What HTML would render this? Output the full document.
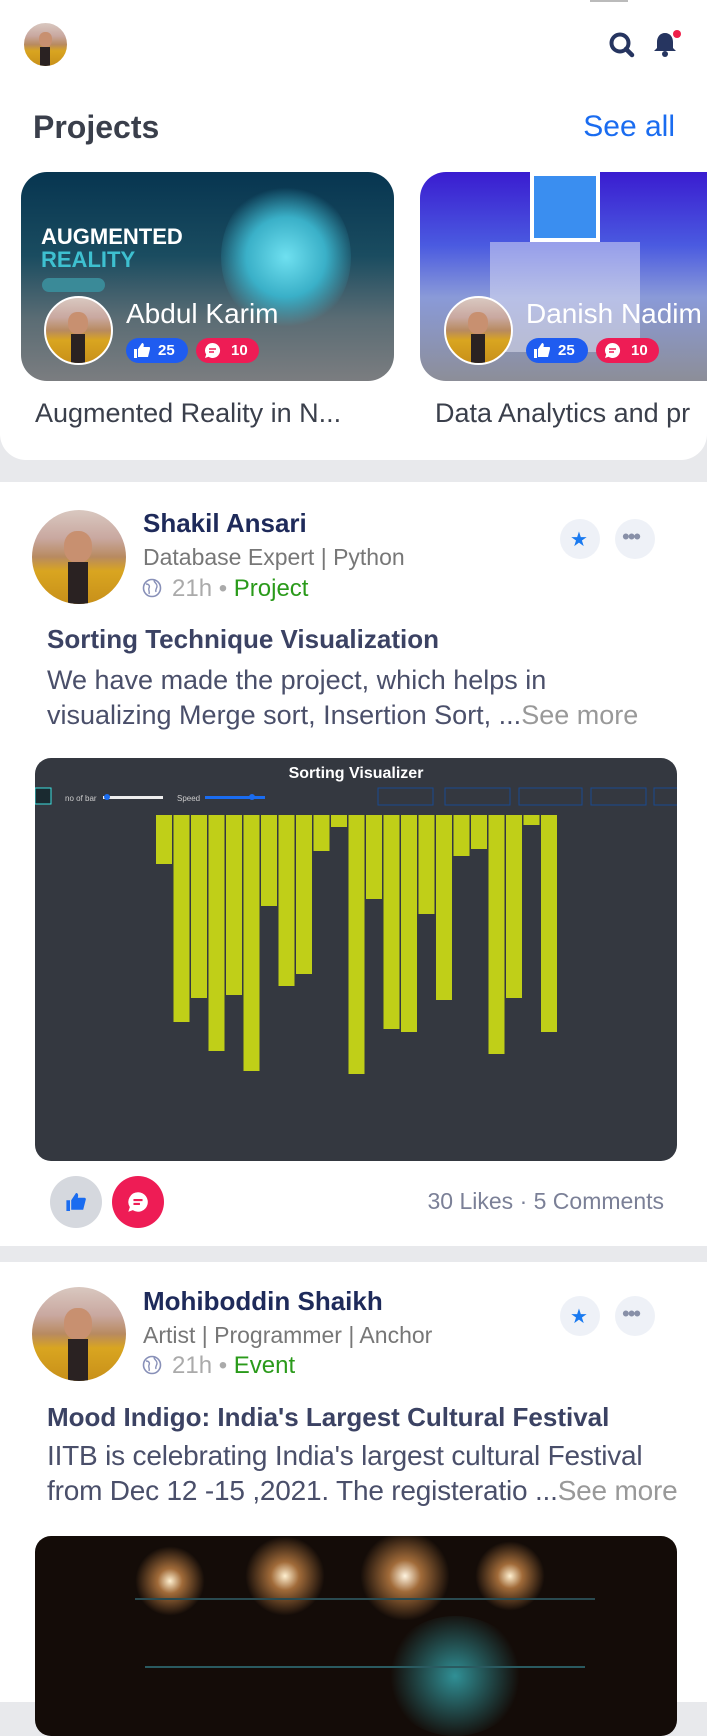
<!DOCTYPE html>
<html><head><meta charset="utf-8"><style>
*{margin:0;padding:0;box-sizing:border-box}
body{width:707px;height:1702px;overflow:hidden;background:#e8e9ec;font-family:"Liberation Sans",sans-serif;position:relative}
.a{position:absolute;white-space:nowrap}
.av{position:absolute;border-radius:50%;overflow:hidden;background:linear-gradient(180deg,#d9c8c0 0%,#c9a8a0 30%,#b88a60 50%,#d9a520 65%,#c8901a 100%);border:2px solid #fff}
.av:after{content:"";position:absolute;left:38%;top:55%;width:22%;height:50%;background:#2a2222}
.av:before{content:"";position:absolute;left:34%;top:22%;width:30%;height:34%;border-radius:45%;background:#c89070}
.badge{position:absolute;height:25px;border-radius:13px;color:#fff;font-weight:bold;font-size:15px;line-height:25px}
.btn{position:absolute;width:40px;height:40px;border-radius:50%;background:#eef1f7}
</style></head><body>
<div class="a" style="left:0;top:0;width:707px;height:460px;background:#fff;border-radius:0 0 26px 26px"></div>
<div class="a" style="left:590px;top:0;width:38px;height:2px;background:#bbb"></div>
<div class="av" style="left:22px;top:21px;width:47px;height:47px"></div>
<svg class="a" style="left:608px;top:31px" width="28" height="28" viewBox="0 0 28 28"><circle cx="12" cy="12" r="8.5" fill="none" stroke="#263560" stroke-width="4"/><path d="M18 18l6 6" stroke="#263560" stroke-width="4.5" stroke-linecap="round"/></svg>
<svg class="a" style="left:651px;top:29px" width="30" height="30" viewBox="0 0 30 30"><path d="M14 4c-5 0-8 4-8 9v6l-3 3h22l-3-3v-6c0-5-3-9-8-9z" fill="#263560"/><circle cx="14" cy="25" r="3" fill="#263560"/><circle cx="26" cy="5" r="4" fill="#f0204a"/></svg>
<div class="a" style="left:33px;top:109px;font-size:32px;font-weight:bold;color:#3a3f4b">Projects</div>
<div class="a" style="right:32px;top:110px;font-size:30px;color:#1a6cf0">See all</div>

<div class="a" style="left:21px;top:172px;width:373px;height:209px;border-radius:26px;overflow:hidden;background:linear-gradient(180deg,#073550 0%,#1a4c60 40%,#5a6c74 70%,#7b7d80 100%)">
 <div class="a" style="left:200px;top:10px;width:130px;height:150px;border-radius:50%;background:radial-gradient(circle,#6fe0f0 0%,#3ab0c8 40%,rgba(40,120,140,0) 70%)"></div>
 <div class="a" style="left:20px;top:52px;font-size:22px;font-weight:bold;color:#fff">AUGMENTED</div>
 <div class="a" style="left:20px;top:75px;font-size:22px;font-weight:bold;color:#3ec0d0">REALITY</div>
 <div class="a" style="left:21px;top:106px;width:63px;height:14px;border-radius:7px;background:#3a8a98"></div>
</div>
<div class="av" style="left:44px;top:296px;width:69px;height:69px"></div>
<div class="a" style="left:126px;top:298px;font-size:28px;color:#fff">Abdul Karim</div>
<div class="badge" style="left:126px;top:338px;width:62px;background:#1f5cf0;padding-left:32px">25</div>
<div class="badge" style="left:196px;top:338px;width:63px;background:#ee1c55;padding-left:35px">10</div>
<svg class="a" style="left:134px;top:343px" width="16" height="15" viewBox="0 0 16 15"><path d="M0 6h3v9H0zM4 6l4-6c2 0 2 2 1.5 4H15c1 0 1.5 1 1 2l-2 8H4z" fill="#fff"/></svg>
<svg class="a" style="left:204px;top:342px" width="17" height="17" viewBox="0 0 17 17"><path d="M8.5 1a7.5 7.5 0 1 1-4 13.8L1 16l1.2-3.5A7.5 7.5 0 0 1 8.5 1z" fill="#fff"/><path d="M5 7h7M5 10h5" stroke="#ee1c55" stroke-width="1.6"/></svg>
<div class="a" style="left:35px;top:398px;font-size:27px;color:#3a3f4b">Augmented Reality in N...</div>

<div class="a" style="left:420px;top:172px;width:287px;height:209px;border-radius:26px 0 0 26px;overflow:hidden;background:linear-gradient(180deg,#3a1cd0 0%,#4a5ae0 35%,#8a9ad8 60%,#8c8e98 100%)">
 <div class="a" style="left:110px;top:0;width:70px;height:70px;background:#3a8ef0;border:4px solid #fff"></div>
 <div class="a" style="left:70px;top:70px;width:150px;height:110px;background:rgba(230,230,245,.5)"></div>
</div>
<div class="av" style="left:444px;top:296px;width:69px;height:69px"></div>
<div class="a" style="left:526px;top:298px;font-size:28px;color:#fff">Danish Nadim</div>
<div class="badge" style="left:526px;top:338px;width:62px;background:#1f5cf0;padding-left:32px">25</div>
<div class="badge" style="left:596px;top:338px;width:63px;background:#ee1c55;padding-left:35px">10</div>
<svg class="a" style="left:534px;top:343px" width="16" height="15" viewBox="0 0 16 15"><path d="M0 6h3v9H0zM4 6l4-6c2 0 2 2 1.5 4H15c1 0 1.5 1 1 2l-2 8H4z" fill="#fff"/></svg>
<svg class="a" style="left:604px;top:342px" width="17" height="17" viewBox="0 0 17 17"><path d="M8.5 1a7.5 7.5 0 1 1-4 13.8L1 16l1.2-3.5A7.5 7.5 0 0 1 8.5 1z" fill="#fff"/><path d="M5 7h7M5 10h5" stroke="#ee1c55" stroke-width="1.6"/></svg>
<div class="a" style="left:435px;top:398px;font-size:27px;color:#3a3f4b">Data Analytics and pr</div>

<!-- post 1 -->
<div class="a" style="left:0;top:482px;width:707px;height:764px;background:#fff"></div>
<div class="av" style="left:30px;top:508px;width:98px;height:98px"></div>
<div class="a" style="left:143px;top:508px;font-size:26px;font-weight:bold;color:#1e2a5a">Shakil Ansari</div>
<div class="a" style="left:143px;top:544px;font-size:23px;color:#777">Database Expert | Python</div>
<svg class="a" style="left:142px;top:578px" width="20" height="20" viewBox="0 0 20 20"><circle cx="10" cy="10" r="8.5" fill="none" stroke="#8890b8" stroke-width="1.6"/><path d="M4 6c3 0 4 2 3 4s1 3 0 6M12 2c0 3 3 3 3 6s-2 3-1 6" fill="none" stroke="#8890b8" stroke-width="1.4"/></svg>
<div class="a" style="left:172px;top:575px;font-size:24px;color:#aaa">21h • <span style="color:#2a9a1a">Project</span></div>
<div class="btn" style="left:560px;top:519px"></div>
<div class="a" style="left:570px;top:527px;font-size:20px;color:#1a7af0">★</div>
<div class="btn" style="left:615px;top:519px"></div>
<div class="a" style="left:622px;top:524px;font-size:22px;color:#8890a8;letter-spacing:-2px">•••</div>
<div class="a" style="left:47px;top:624px;font-size:26px;font-weight:bold;color:#3b4263">Sorting Technique Visualization</div>
<div class="a" style="left:47px;top:663px;font-size:27px;color:#4a4f6a;line-height:35px">We have made the project, which helps in<br>visualizing Merge sort, Insertion Sort, ...<span style="color:#999">See more</span></div>
<svg class="a" style="left:35px;top:758px" width="642" height="403" viewBox="0 0 642 403">
<rect width="642" height="403" rx="16" fill="#343840"/>
<text x="321" y="20" fill="#fff" font-size="16" font-weight="bold" text-anchor="middle" font-family="Liberation Sans">Sorting Visualizer</text>
<rect x="0" y="30" width="16" height="16" fill="#1a2a30" stroke="#3ee0e0"/>
<text x="30" y="43" fill="#ccc" font-size="8" font-family="Liberation Sans">no of bar</text>
<rect x="68" y="38" width="60" height="3" fill="#eee"/><circle cx="72" cy="39" r="3" fill="#1a6cf0"/>
<text x="142" y="43" fill="#ccc" font-size="8" font-family="Liberation Sans">Speed</text>
<rect x="170" y="38" width="60" height="3" fill="#1a6cf0"/><circle cx="217" cy="39" r="3" fill="#1a6cf0"/>
<g fill="none" stroke="#1a4a90"><rect x="343" y="30" width="55" height="17"/><rect x="410" y="30" width="65" height="17"/><rect x="484" y="30" width="63" height="17"/><rect x="556" y="30" width="55" height="17"/><rect x="619" y="30" width="30" height="17"/></g>
<g fill="#c0cf18">
<rect x="121" y="57" width="16" height="49"/><rect x="138.5" y="57" width="16" height="207"/><rect x="156" y="57" width="16" height="183"/><rect x="173.5" y="57" width="16" height="236"/><rect x="191" y="57" width="16" height="180"/><rect x="208.5" y="57" width="16" height="256"/><rect x="226" y="57" width="16" height="91"/><rect x="243.5" y="57" width="16" height="171"/><rect x="261" y="57" width="16" height="159"/><rect x="278.5" y="57" width="16" height="36"/><rect x="296" y="57" width="16" height="12"/><rect x="313.5" y="57" width="16" height="259"/><rect x="331" y="57" width="16" height="84"/><rect x="348.5" y="57" width="16" height="214"/><rect x="366" y="57" width="16" height="217"/><rect x="383.5" y="57" width="16" height="99"/><rect x="401" y="57" width="16" height="185"/><rect x="418.5" y="57" width="16" height="41"/><rect x="436" y="57" width="16" height="34"/><rect x="453.5" y="57" width="16" height="239"/><rect x="471" y="57" width="16" height="183"/><rect x="488.5" y="57" width="16" height="10"/><rect x="506" y="57" width="16" height="217"/>
</g></svg>
<div class="a" style="left:50px;top:1176px;width:52px;height:52px;border-radius:50%;background:#d5d8de"></div>
<svg class="a" style="left:66px;top:1193px" width="20" height="18" viewBox="0 0 16 15"><path d="M0 6h3v9H0zM4 6l4-6c2 0 2 2 1.5 4H15c1 0 1.5 1 1 2l-2 8H4z" fill="#1a6cf0"/></svg>
<div class="a" style="left:112px;top:1176px;width:52px;height:52px;border-radius:50%;background:#ee1c55"></div>
<svg class="a" style="left:127px;top:1191px" width="22" height="22" viewBox="0 0 17 17"><path d="M8.5 1a7.5 7.5 0 1 1-4 13.8L1 16l1.2-3.5A7.5 7.5 0 0 1 8.5 1z" fill="#fff"/><path d="M5 7h7M5 10h5" stroke="#ee1c55" stroke-width="1.6"/></svg>
<div class="a" style="right:43px;top:1188px;font-size:23px;color:#7b8097">30 Likes · 5 Comments</div>

<!-- post 2 -->
<div class="a" style="left:0;top:1262px;width:707px;height:440px;background:#fff"></div>
<div class="av" style="left:30px;top:1285px;width:98px;height:98px"></div>
<div class="a" style="left:143px;top:1286px;font-size:26px;font-weight:bold;color:#1e2a5a">Mohiboddin Shaikh</div>
<div class="a" style="left:143px;top:1322px;font-size:23px;color:#777">Artist | Programmer | Anchor</div>
<svg class="a" style="left:142px;top:1355px" width="20" height="20" viewBox="0 0 20 20"><circle cx="10" cy="10" r="8.5" fill="none" stroke="#8890b8" stroke-width="1.6"/><path d="M4 6c3 0 4 2 3 4s1 3 0 6M12 2c0 3 3 3 3 6s-2 3-1 6" fill="none" stroke="#8890b8" stroke-width="1.4"/></svg>
<div class="a" style="left:172px;top:1352px;font-size:24px;color:#aaa">21h • <span style="color:#2a9a1a">Event</span></div>
<div class="btn" style="left:560px;top:1296px"></div>
<div class="a" style="left:570px;top:1304px;font-size:20px;color:#1a7af0">★</div>
<div class="btn" style="left:615px;top:1296px"></div>
<div class="a" style="left:622px;top:1301px;font-size:22px;color:#8890a8;letter-spacing:-2px">•••</div>
<div class="a" style="left:47px;top:1402px;font-size:26px;font-weight:bold;color:#3b4263">Mood Indigo: India's Largest Cultural Festival</div>
<div class="a" style="left:47px;top:1438px;font-size:28px;color:#4a4f6a;line-height:35px;letter-spacing:-0.2px">IITB is celebrating India's largest cultural Festival<br>from Dec 12 -15 ,2021. The registeratio ...<span style="color:#999">See more</span></div>
<div class="a" style="left:35px;top:1536px;width:642px;height:200px;border-radius:16px;overflow:hidden;background:#140c08">
 <div class="a" style="left:100px;top:10px;width:70px;height:70px;border-radius:50%;background:radial-gradient(circle,#fff0d0 0%,rgba(255,170,90,.6) 25%,rgba(0,0,0,0) 70%)"></div>
 <div class="a" style="left:210px;top:0;width:80px;height:80px;border-radius:50%;background:radial-gradient(circle,#fff0d0 0%,rgba(255,170,90,.6) 25%,rgba(0,0,0,0) 70%)"></div>
 <div class="a" style="left:325px;top:-5px;width:90px;height:90px;border-radius:50%;background:radial-gradient(circle,#fff4e0 0%,rgba(255,170,90,.6) 25%,rgba(0,0,0,0) 70%)"></div>
 <div class="a" style="left:440px;top:5px;width:70px;height:70px;border-radius:50%;background:radial-gradient(circle,#fff0d0 0%,rgba(255,170,90,.6) 25%,rgba(0,0,0,0) 70%)"></div>
 <div class="a" style="left:350px;top:80px;width:140px;height:120px;border-radius:50%;background:radial-gradient(circle,rgba(60,200,210,.7) 0%,rgba(0,0,0,0) 70%)"></div>
 <div class="a" style="left:100px;top:62px;width:460px;height:2px;background:#2a4a50"></div>
 <div class="a" style="left:110px;top:130px;width:440px;height:2px;background:#2a5a60"></div>
</div>
</body></html>
